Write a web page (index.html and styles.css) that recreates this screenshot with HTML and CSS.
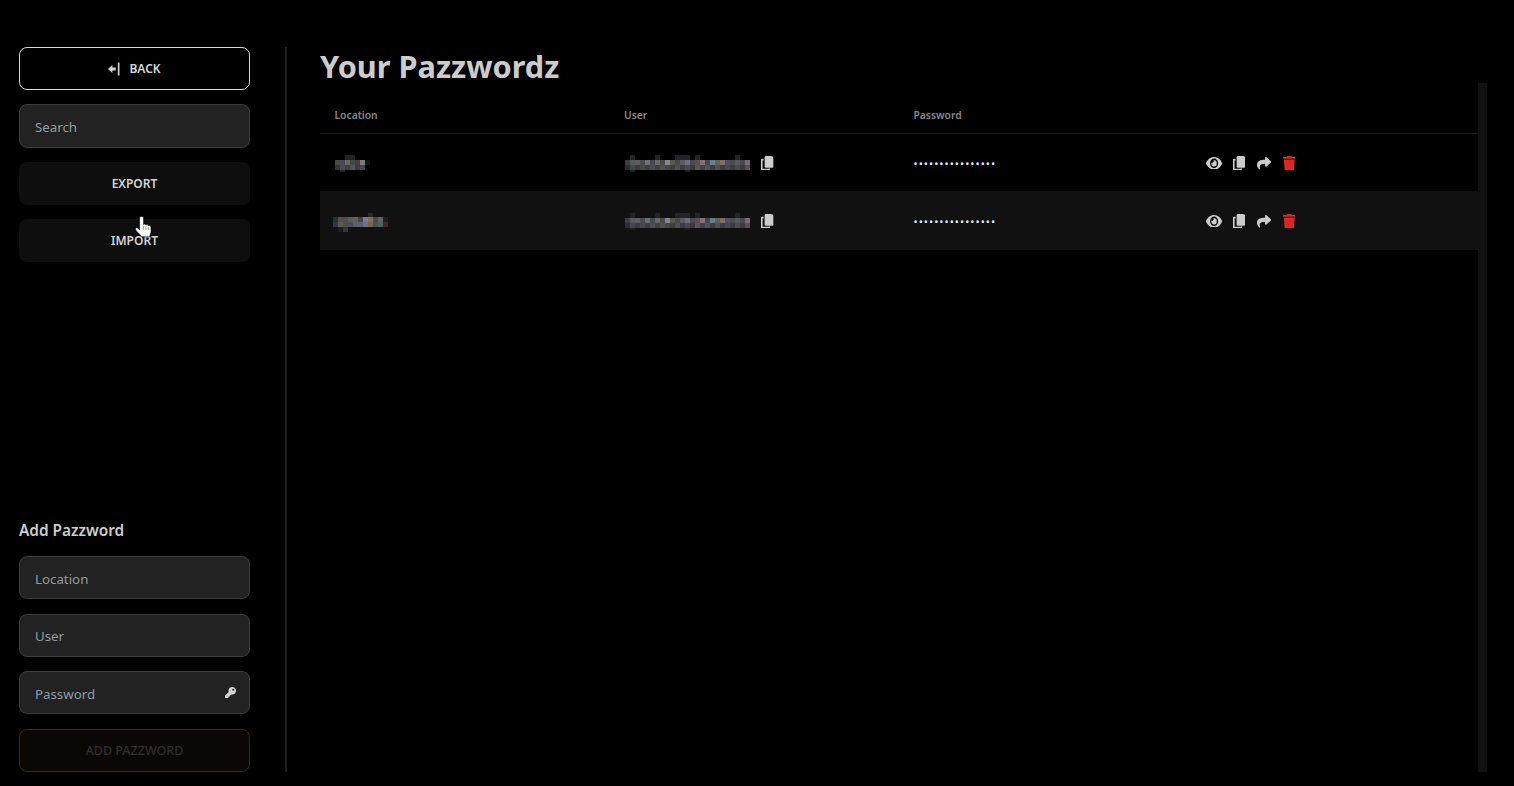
FILE: index.html
```html
<!DOCTYPE html>
<html lang="en">
<head>
<meta charset="utf-8">
<title>Your Pazzwordz</title>
<link rel="stylesheet" href="styles.css">
</head>
<body>
<svg class="defs" width="0" height="0" aria-hidden="true">
  <symbol id="i-eye" viewBox="0 64 576 384" preserveAspectRatio="none"><path d="M572.52 241.4C518.29 135.59 410.93 64 288 64S57.68 135.64 3.48 241.41a32.35 32.35 0 0 0 0 29.19C57.71 376.41 165.07 448 288 448s230.32-71.64 284.52-177.41a32.35 32.35 0 0 0 0-29.19zM288 400a144 144 0 1 1 144-144 143.93 143.93 0 0 1-144 144zm0-240a95.31 95.31 0 0 0-25.31 3.79 47.85 47.85 0 0 1-66.9 66.9A95.78 95.78 0 1 0 288 160z"/></symbol>
  <symbol id="i-copy" viewBox="0 0 448 512"><path d="M176 0H340Q448 0 448 110V370Q448 416 400 416H176Q130 416 130 370V46Q130 0 176 0Z"/><path d="M92 100H40Q0 100 0 140V470Q0 512 40 512H280Q320 512 320 470V445H262V458H56V156H92Z"/></symbol>
  <symbol id="i-share" viewBox="0 0 512 512"><path d="M503.691 189.836L327.687 37.851C312.281 24.546 288 35.347 288 56.015v80.053C127.371 137.907 0 170.1 0 322.326c0 61.441 39.581 122.309 83.333 154.132 13.653 9.931 33.111-2.533 28.077-18.631C66.066 312.814 132.917 274.316 288 272.085V360c0 20.7 24.3 31.453 39.687 18.164l176.004-152c11.071-9.562 11.086-26.753 0-36.328z"/></symbol>
  <symbol id="i-trash" viewBox="0 0 448 512"><path d="M432 32H312l-9.4-18.7A24 24 0 0 0 281.1 0H166.8a23.72 23.72 0 0 0-21.4 13.3L136 32H16A16 16 0 0 0 0 48v32a16 16 0 0 0 16 16h416a16 16 0 0 0 16-16V48a16 16 0 0 0-16-16zM53.2 467a48 48 0 0 0 47.9 45h245.8a48 48 0 0 0 47.9-45L416 128H32z"/></symbol>
  <symbol id="m-user" viewBox="0 0 125 20">
    <g fill="#242428"><rect x="5" y="0" width="5" height="5"/><rect x="30" y="0" width="5" height="5"/><rect x="50" y="0" width="15" height="5"/><rect x="70" y="0" width="5" height="5"/><rect x="110" y="0" width="5" height="5"/></g>
    <rect x="0" y="5" width="5" height="5" fill="#3a4044"/><rect x="5" y="5" width="5" height="5" fill="#565a58"/><rect x="10" y="5" width="5" height="5" fill="#5f5d60"/><rect x="15" y="5" width="5" height="5" fill="#4a4a4f"/><rect x="20" y="5" width="5" height="5" fill="#6f706e"/><rect x="25" y="5" width="5" height="5" fill="#454850"/><rect x="30" y="5" width="5" height="5" fill="#68686a"/><rect x="35" y="5" width="5" height="5" fill="#4c4a48"/><rect x="40" y="5" width="5" height="5" fill="#7b8a92"/><rect x="45" y="5" width="5" height="5" fill="#5c5848"/><rect x="50" y="5" width="5" height="5" fill="#46484c"/><rect x="55" y="5" width="5" height="5" fill="#5e5c60"/><rect x="60" y="5" width="5" height="5" fill="#66707a"/><rect x="65" y="5" width="5" height="5" fill="#4e4850"/><rect x="70" y="5" width="5" height="5" fill="#5a5050"/><rect x="75" y="5" width="5" height="5" fill="#7d7078"/><rect x="80" y="5" width="5" height="5" fill="#46484e"/><rect x="85" y="5" width="5" height="5" fill="#6e7c84"/><rect x="90" y="5" width="5" height="5" fill="#5c6064"/><rect x="95" y="5" width="5" height="5" fill="#7a7068"/><rect x="100" y="5" width="5" height="5" fill="#50505a"/><rect x="105" y="5" width="5" height="5" fill="#484c50"/><rect x="110" y="5" width="5" height="5" fill="#585a5c"/><rect x="115" y="5" width="5" height="5" fill="#4a484c"/><rect x="120" y="5" width="5" height="5" fill="#786a70"/>
    <rect x="0" y="10" width="5" height="5" fill="#2a2e32"/><rect x="5" y="10" width="5" height="5" fill="#44484a"/><rect x="10" y="10" width="5" height="5" fill="#3a3a40"/><rect x="15" y="10" width="5" height="5" fill="#48484a"/><rect x="20" y="10" width="5" height="5" fill="#3c3e42"/><rect x="25" y="10" width="5" height="5" fill="#4e4e50"/><rect x="30" y="10" width="5" height="5" fill="#404044"/><rect x="35" y="10" width="5" height="5" fill="#54504c"/><rect x="40" y="10" width="5" height="5" fill="#44484c"/><rect x="45" y="10" width="5" height="5" fill="#3e3e3c"/><rect x="50" y="10" width="5" height="5" fill="#505054"/><rect x="55" y="10" width="5" height="5" fill="#3c3c44"/><rect x="60" y="10" width="5" height="5" fill="#484a4e"/><rect x="65" y="10" width="5" height="5" fill="#3c383c"/><rect x="70" y="10" width="5" height="5" fill="#5a5458"/><rect x="75" y="10" width="5" height="5" fill="#44404a"/><rect x="80" y="10" width="5" height="5" fill="#50545a"/><rect x="85" y="10" width="5" height="5" fill="#3a3e44"/><rect x="90" y="10" width="5" height="5" fill="#54504c"/><rect x="95" y="10" width="5" height="5" fill="#3e3c40"/><rect x="100" y="10" width="5" height="5" fill="#48484e"/><rect x="105" y="10" width="5" height="5" fill="#3a3c40"/><rect x="110" y="10" width="5" height="5" fill="#4c4c4e"/><rect x="115" y="10" width="5" height="5" fill="#3c3a3e"/><rect x="120" y="10" width="5" height="5" fill="#5c5054"/>
    <g fill="#1e1e22"><rect x="60" y="15" width="5" height="2"/><rect x="5" y="15" width="5" height="2"/></g>
  </symbol>
</svg>

<div class="app">
  <aside class="sidebar">
    <div class="stack stack-top">
      <button class="btn btn-outline" type="button">
        <svg class="back-icon" viewBox="0 0 12 14" aria-hidden="true"><path d="M0 7 4.4 3V5.6H7.8V8.4H4.4V11Z"/><rect x="9.8" y="0.5" width="1.7" height="13"/></svg>
        BACK
      </button>
      <input class="field" type="text" placeholder="Search">
      <button class="btn btn-dark" type="button">EXPORT</button>
      <button class="btn btn-dark" type="button">IMPORT</button>
    </div>
    <form class="stack stack-form">
      <h2 class="form-title">Add Pazzword</h2>
      <input class="field" type="text" placeholder="Location">
      <input class="field" type="text" placeholder="User">
      <div class="field-wrap">
        <input class="field" type="password" placeholder="Password">
        <svg class="key-icon" viewBox="0 0 512 512" aria-hidden="true"><path d="M512 176.001C512 273.203 433.202 352 336 352c-11.22 0-22.19-1.062-32.827-3.069l-24.012 27.014A23.999 23.999 0 0 1 261.223 384H224v40c0 13.255-10.745 24-24 24h-40v40c0 13.255-10.745 24-24 24H24c-13.255 0-24-10.745-24-24v-78.059c0-6.365 2.529-12.47 7.029-16.971l161.802-161.802C163.108 213.814 160 195.271 160 176 160 78.798 238.797.001 335.999 0 433.488-.001 512 78.511 512 176.001zM336 128c0 26.51 21.49 48 48 48s48-21.49 48-48-21.49-48-48-48-48 21.49-48 48z"/></svg>
      </div>
      <button class="btn btn-disabled" type="button">ADD PAZZWORD</button>
    </form>
  </aside>

  <div class="divider"></div>

  <main class="main">
    <h1 class="title">Your Pazzwordz</h1>
    <div class="scroller">
      <div class="table">
        <div class="row row-head">
          <div class="cell">Location</div>
          <div class="cell">User</div>
          <div class="cell">Password</div>
          <div class="cell"></div>
        </div>
        <div class="row row-first">
          <div class="cell">
            <svg class="mosaic mosaic-loc1" viewBox="0 0 35 17" aria-hidden="true">
              <rect x="10" y="0" width="10" height="5" fill="#232325"/>
              <rect x="0" y="5" width="5" height="5" fill="#47483f"/><rect x="5" y="5" width="5" height="5" fill="#4a4658"/><rect x="10" y="5" width="5" height="5" fill="#6a685e"/><rect x="15" y="5" width="5" height="5" fill="#3c4a4c"/><rect x="20" y="5" width="5" height="5" fill="#4a3a3a"/><rect x="25" y="5" width="5" height="5" fill="#787c7c"/><rect x="30" y="5" width="5" height="5" fill="#15150c"/>
              <rect x="0" y="10" width="5" height="5" fill="#35352f"/><rect x="5" y="10" width="5" height="5" fill="#4c4860"/><rect x="10" y="10" width="5" height="5" fill="#3e3e3a"/><rect x="15" y="10" width="5" height="5" fill="#50545a"/><rect x="20" y="10" width="5" height="5" fill="#3a3a40"/><rect x="25" y="10" width="5" height="5" fill="#48484a"/>
              <rect x="5" y="15" width="5" height="2" fill="#23232b"/>
            </svg>
          </div>
          <div class="cell cell-user">
            <svg class="mosaic mosaic-user" aria-hidden="true"><use href="#m-user"/></svg>
            <svg class="icon icon-copy" aria-hidden="true"><use href="#i-copy"/></svg>
          </div>
          <div class="cell dots">••••••••••••••••</div>
          <div class="cell cell-actions">
            <span class="action"><svg class="icon icon-eye" aria-hidden="true"><use href="#i-eye"/></svg></span>
            <span class="action"><svg class="icon icon-copy" aria-hidden="true"><use href="#i-copy"/></svg></span>
            <span class="action"><svg class="icon icon-share" aria-hidden="true"><use href="#i-share"/></svg></span>
            <span class="action"><svg class="icon icon-trash" aria-hidden="true"><use href="#i-trash"/></svg></span>
          </div>
        </div>
        <div class="row row-alt">
          <div class="cell">
            <svg class="mosaic mosaic-loc2" viewBox="0 0 55 19" aria-hidden="true">
              <rect x="35" y="0" width="5" height="4" fill="#2a2a2a"/>
              <rect x="0" y="4" width="5" height="5" fill="#26303a"/><rect x="5" y="4" width="5" height="5" fill="#4e5050"/><rect x="10" y="4" width="5" height="5" fill="#50504e"/><rect x="15" y="4" width="5" height="5" fill="#5e5a5a"/><rect x="20" y="4" width="5" height="5" fill="#60605c"/><rect x="25" y="4" width="5" height="5" fill="#44443c"/><rect x="30" y="4" width="5" height="5" fill="#787a92"/><rect x="35" y="4" width="5" height="5" fill="#806e58"/><rect x="40" y="4" width="5" height="5" fill="#4a4a58"/><rect x="45" y="4" width="5" height="5" fill="#5c6464"/><rect x="50" y="4" width="5" height="5" fill="#1e1e20"/>
              <rect x="0" y="9" width="5" height="5" fill="#2c3848"/><rect x="5" y="9" width="5" height="5" fill="#60584c"/><rect x="10" y="9" width="5" height="5" fill="#4a4e50"/><rect x="15" y="9" width="5" height="5" fill="#44525c"/><rect x="20" y="9" width="5" height="5" fill="#5c6068"/><rect x="25" y="9" width="5" height="5" fill="#5e6270"/><rect x="30" y="9" width="5" height="5" fill="#6e7088"/><rect x="35" y="9" width="5" height="5" fill="#76664e"/><rect x="40" y="9" width="5" height="5" fill="#4c4c5c"/><rect x="45" y="9" width="5" height="5" fill="#4a6260"/><rect x="50" y="9" width="5" height="5" fill="#3c2824"/>
              <rect x="5" y="14" width="5" height="5" fill="#1c1c24"/><rect x="10" y="14" width="5" height="5" fill="#343434"/>
            </svg>
          </div>
          <div class="cell cell-user">
            <svg class="mosaic mosaic-user" aria-hidden="true"><use href="#m-user"/></svg>
            <svg class="icon icon-copy" aria-hidden="true"><use href="#i-copy"/></svg>
          </div>
          <div class="cell dots">••••••••••••••••</div>
          <div class="cell cell-actions">
            <span class="action"><svg class="icon icon-eye" aria-hidden="true"><use href="#i-eye"/></svg></span>
            <span class="action"><svg class="icon icon-copy" aria-hidden="true"><use href="#i-copy"/></svg></span>
            <span class="action"><svg class="icon icon-share" aria-hidden="true"><use href="#i-share"/></svg></span>
            <span class="action"><svg class="icon icon-trash" aria-hidden="true"><use href="#i-trash"/></svg></span>
          </div>
        </div>
      </div>
      <div class="scroll-track"></div>
    </div>
  </main>
</div>

<svg class="cursor" viewBox="0 0 17 22" aria-hidden="true">
  <path d="M4.6 1.6C4.6.1 8.6.1 8.6 1.6V8.5C9.2 7.7 10.6 7.7 11 9 11.8 8.2 13.1 8.4 13.4 9.8 14.2 9.3 16 9.5 16 11.2V15.5C16 17.5 15 18.5 14.7 20.8H6.5C6 18.8 1 15.5.5 13.5.3 11.8 1.8 11 3 12.2L4.6 14Z" fill="#fff" stroke="#000" stroke-width=".6"/>
  <path d="M8.6 10V14M11 10V14M13.4 10.5V14" stroke="#777" stroke-width=".7" fill="none"/>
</svg>
</body>
</html>
```
FILE: styles.css
```css
* { box-sizing: border-box; }

html, body {
  margin: 0;
  height: 100%;
  background: #000;
  overflow: hidden;
}

body {
  font-family: "Noto Sans", "Open Sans", sans-serif;
  color: #ccc;
}

.defs { position: absolute; }

.app {
  display: flex;
  height: 786px;
  padding: 47px 27px 14px 19px;
}

.sidebar {
  flex: 0 0 231px;
  display: flex;
  flex-direction: column;
  justify-content: space-between;
}

.stack {
  display: flex;
  flex-direction: column;
}

.stack-top { gap: 14.05px; }
.stack-form { gap: 14.35px; }

.btn {
  display: flex;
  align-items: center;
  justify-content: center;
  height: 43.3px;
  width: 100%;
  padding: 0;
  border-radius: 8px;
  font: 600 12px "Noto Sans", "Open Sans", sans-serif;
  cursor: pointer;
}

.btn-outline {
  gap: 9px;
  background: #000;
  border: 1px solid #d8d8d8;
  color: #d8d8d8;
}

.back-icon {
  width: 12px;
  height: 14px;
  fill: #d0d0d0;
}

.btn-dark {
  background: #0e0e0e;
  border: 0;
  color: #d4d4d4;
}

.btn-disabled {
  height: 43.2px;
  background: #0a0704;
  border: 1px solid #2c2c2c;
  color: #322f2c;
  font-size: 12.5px;
  font-weight: 500;
}

.field {
  display: block;
  width: 100%;
  height: 43.3px;
  padding: 2px 15px 0;
  background: #222;
  border: 1px solid #3c3c3c;
  border-radius: 8px;
  color: #ccc;
  font: 400 13.3px "Noto Sans", "Open Sans", sans-serif;
  outline: none;
}

.stack-form .field { height: 43.2px; }

.field::placeholder {
  color: #929aa2;
  opacity: 1;
}

.field-wrap { position: relative; }

.key-icon {
  position: absolute;
  right: 14px;
  top: 16px;
  width: 11px;
  height: 11px;
  fill: #d4d4d4;
}

.form-title {
  margin: 0;
  height: 21px;
  line-height: 19px;
  font-size: 15.4px;
  font-weight: 600;
  color: #ccc;
}

.divider {
  flex: 0 0 2px;
  margin-left: 35px;
  background: #1c1c1c;
}

.main {
  flex: 1;
  min-width: 0;
  display: flex;
  flex-direction: column;
  margin-left: 33px;
}

.title {
  margin: 0;
  height: 36px;
  line-height: 38px;
  font-size: 30.7px;
  font-weight: 700;
  color: #ccc;
}

.scroller {
  flex: 1;
  display: flex;
  min-height: 0;
}

.table {
  flex: 1;
  min-width: 0;
  padding-top: 14px;
}

.scroll-track {
  flex: 0 0 9px;
  background: #111;
}

.row {
  display: grid;
  grid-template-columns: repeat(4, 1fr);
  align-items: center;
}

.row-head {
  height: 37px;
  border-bottom: 1px solid #191919;
  font-size: 10.3px;
  font-weight: 600;
  color: #888;
}

.row-first {
  height: 57px;
  padding-top: 1px;
}

.row-alt {
  height: 59px;
  padding-top: 1px;
  background: #111;
}

.cell {
  display: flex;
  align-items: center;
  padding-left: 14.5px;
  min-width: 0;
}

.cell-user { gap: 11px; }

.dots {
  padding-top: 2px;
  font-size: 11px;
  letter-spacing: 1.03px;
  color: #e4eaf8;
  line-height: 16px;
}

.cell-actions { padding-left: 13px; }

.action {
  display: flex;
  justify-content: center;
  align-items: center;
  width: 25px;
}

.icon {
  display: block;
  height: 14.4px;
  fill: #ccc;
}

.icon-eye { width: 16.2px; height: 12.7px; }
.icon-copy { width: 12.6px; }
.icon-share { width: 14.4px; }
.icon-trash { width: 12.6px; fill: #dc2626; }

.mosaic { display: block; shape-rendering: crispEdges; }
.mosaic-loc1 { width: 35px; height: 17px; margin: 1px 0 0 0.5px; }
.mosaic-loc2 { width: 55px; height: 19px; margin: 3px 0 0 -1.5px; }
.mosaic-user { width: 125px; height: 20px; margin: 4px 0 0 1px; }

.cursor {
  position: absolute;
  left: 135px;
  top: 216px;
  width: 17px;
  height: 22px;
}
```
